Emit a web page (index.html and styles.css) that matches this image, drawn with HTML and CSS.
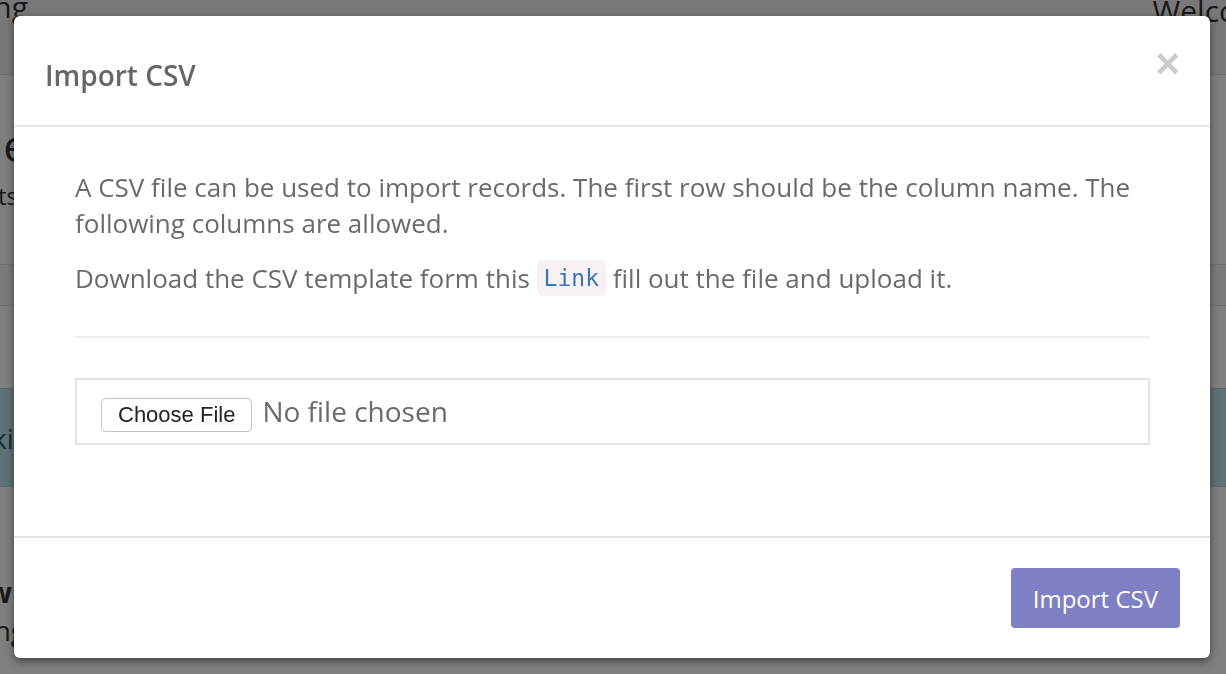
FILE: index.html
```html
<!DOCTYPE html>
<html lang="en">
<head>
<meta charset="utf-8">
<title>Import CSV</title>
<link rel="stylesheet" href="styles.css">
</head>
<body>
<div class="page">
  <nav class="nav">
    <div class="edge edge-brand"><span>Loading</span></div>
    <span class="nav-user">Welcome, admin</span>
  </nav>
  <main class="content">
    <div class="edge edge-title"><h1 class="page-title">Table</h1></div>
    <div class="edge edge-sub"><p class="page-sub">Records imports</p></div>
    <div class="table-head"></div>
    <div class="alert"><span class="alert-text">Checking import</span></div>
    <div class="edge edge-sec"><h3 class="sec-title">New</h3></div>
    <div class="edge edge-sec2"><p class="sec-text">Pending</p></div>
  </main>
</div>

<div class="backdrop">
  <div class="modal" role="dialog" aria-labelledby="modal-title">
    <header class="modal-header">
      <h4 class="modal-title" id="modal-title">Import CSV</h4>
      <button class="modal-close" type="button" aria-label="Close">&times;</button>
    </header>
    <section class="modal-body">
      <p class="text">A CSV file can be used to import records. The first row should be the column name. The following columns are allowed.</p>
      <p class="text text-2">Download the CSV template form this <code class="code">Link</code> fill out the file and upload it.</p>
      <hr class="divider">
      <div class="file-box">
        <input class="file-input" type="file">
      </div>
    </section>
    <footer class="modal-footer">
      <button class="btn-primary" type="button">Import CSV</button>
    </footer>
  </div>
</div>
</body>
</html>
```

FILE: styles.css
```css
* { box-sizing: border-box; }
html, body { margin: 0; padding: 0; height: 100%; overflow: hidden; }
body {
  font-family: "Open Sans", "Liberation Sans", sans-serif;
  color: #333;
  background: #fff;
}

/* background page (mostly hidden under the dialog) */
.page { width: 1226px; height: 674px; overflow: hidden; }
.edge {
  display: flex;
  justify-content: flex-end;
  white-space: nowrap;
}
.nav {
  height: 75px;
  display: flex;
  justify-content: space-between;
  align-items: flex-start;
  background: #f0f0f0;
  border-bottom: 1px solid #dcdcdc;
}
.edge-brand {
  width: 28px;
  font-size: 30px;
  line-height: 30px;
  margin-top: -8px;
  color: #333;
}
.nav-user {
  font-size: 30px;
  line-height: 30px;
  margin-top: -4px;
  margin-right: -160px;
  color: #333;
}
.edge-title { width: 28px; margin-top: 44px; }
.page-title {
  margin: 0;
  font-size: 44px;
  font-weight: 400;
  line-height: 52px;
}
.edge-sub { width: 18px; margin-top: 10px; }
.page-sub {
  margin: 0;
  font-size: 24px;
  line-height: 30px;
}
.table-head {
  margin-top: 53px;
  height: 42px;
  border-top: 1px solid #ddd;
  border-bottom: 1px solid #ddd;
  background: #f6f6f6;
}
.alert {
  margin-top: 82px;
  height: 99px;
  background: #bfe3ee;
  border-top: 1px solid #aacfdb;
  border-bottom: 1px solid #aacfdb;
  color: #2a5f72;
  font-size: 28px;
  line-height: 99px;
  white-space: nowrap;
}
.alert-text { display: inline-block; margin-left: -72px; }
.edge-sec { width: 12px; margin-top: 88px; }
.sec-title {
  margin: 0;
  font-size: 28px;
  font-weight: 700;
  line-height: 34px;
}
.edge-sec2 { width: 26px; margin-top: 4px; }
.sec-text {
  margin: 0;
  font-size: 28px;
  line-height: 34px;
}

/* overlay + dialog */
.backdrop {
  position: fixed;
  inset: 0;
  background: rgba(0, 0, 0, 0.5);
  padding: 16px 16px 16px 14px;
}
.modal {
  width: 1196px;
  height: 642px;
  background: #fff;
  border-radius: 6px;
  box-shadow: 0 3px 9px rgba(0, 0, 0, 0.5);
  display: flex;
  flex-direction: column;
}
.modal-header {
  height: 111px;
  flex: none;
  display: flex;
  align-items: flex-start;
  justify-content: space-between;
  padding: 39px 30px 0 31px;
  border-bottom: 2px solid #e5e5e5;
}
.modal-title {
  margin: 0;
  font-size: 28px;
  font-weight: 600;
  line-height: 40px;
  color: #63676b;
}
.modal-close {
  border: 0;
  background: none;
  padding: 0;
  margin-top: -12px;
  font-family: "Liberation Sans", "DejaVu Sans", sans-serif;
  font-size: 42px;
  font-weight: 700;
  line-height: 1;
  color: #cbcbcb;
  cursor: pointer;
}
.modal-body {
  flex: 1;
  padding: 42px 60px 0 61px;
  border-bottom: 2px solid #e5e5e5;
}
.text {
  margin: 0;
  font-size: 26px;
  line-height: 36px;
  color: #676b6f;
}
.text-2 { margin-top: 19px; }
.code {
  display: inline-block;
  font-family: "DejaVu Sans Mono", "Liberation Mono", monospace;
  font-size: 23px;
  line-height: 36px;
  color: #3a78b5;
  background: #f8f1f4;
  border-radius: 6px;
  padding: 0 7px;
  vertical-align: top;
}
.divider {
  border: 0;
  border-top: 2px solid #eeeeee;
  margin: 40px 0 40px 0;
}
.file-box {
  height: 67px;
  border: 2px solid #e3e3e3;
  padding: 12px 0 0 24px;
}
.file-input {
  font-family: "Open Sans", "Liberation Sans", sans-serif;
  font-size: 28px;
  color: #676b6f;
}
.file-input::file-selector-button {
  font-family: "Liberation Sans", "DejaVu Sans", sans-serif;
  font-size: 22px;
  color: #222;
  background: #fff;
  border: 1px solid #c4c4c4;
  border-radius: 5px;
  padding: 0 16px;
  height: 34px;
  margin-right: 10px;
  box-shadow: 0 1px 1px rgba(0,0,0,0.08);
  vertical-align: middle;
}
.modal-footer {
  flex: none;
  height: 120px;
  display: flex;
  justify-content: flex-end;
  align-items: flex-start;
  padding: 30px 30px 0 0;
}
.btn-primary {
  height: 60px;
  padding: 0 22px;
  border: 0;
  border-radius: 4px;
  background: #7f80c4;
  color: #fff;
  font-family: "Open Sans", "Liberation Sans", sans-serif;
  font-size: 24px;
  cursor: pointer;
}
```
